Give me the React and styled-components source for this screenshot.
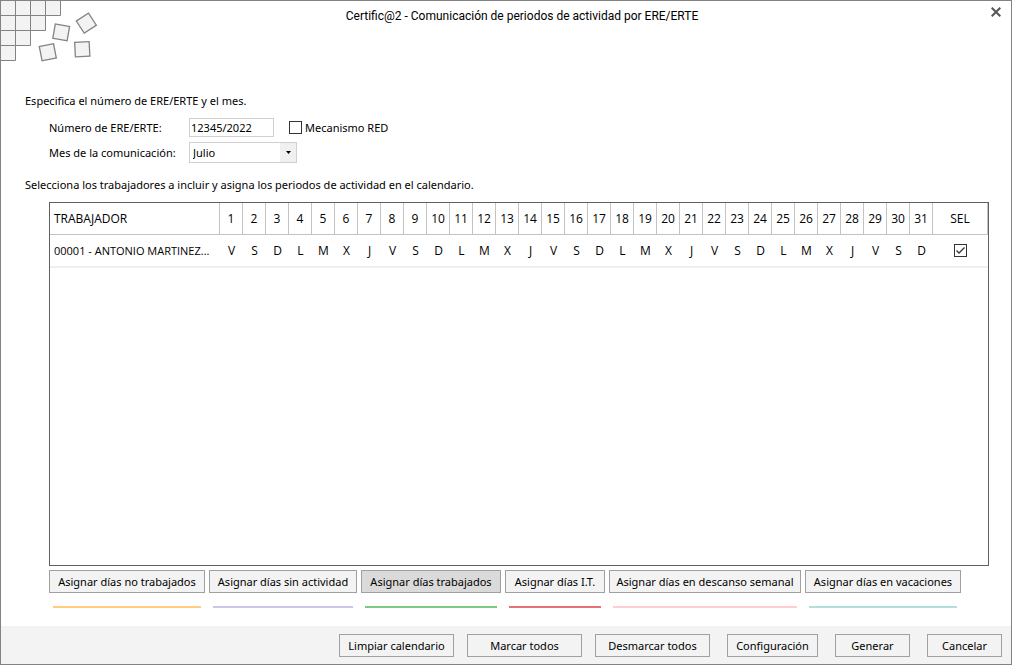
import React, { useState } from 'react';
import styled, { createGlobalStyle } from 'styled-components';

const GlobalStyle = createGlobalStyle`
    * {
        box-sizing: border-box;
    }

    body {
        margin: 0;
        background: #FFFFFF;
        color: #000000;
        font-family: 'Noto Sans', 'Open Sans', sans-serif;
        font-size: 11px;
        line-height: 16px;
    }

    button, input, select {
        font: inherit;
        color: inherit;
    }
`;

const Window = styled.div`
    display: flex;
    flex-direction: column;
    min-height: 100vh;
    border: 1px solid #838383;
`;

const Header = styled.header`
    display: flex;
    align-items: flex-start;
    height: 62px;
`;

const Logo = styled.svg`
    flex: none;
    width: 98px;
    height: 62px;
    fill: #F3F3F3;
    stroke: #838383;
`;

const Title = styled.h1`
    flex: 1;
    margin: 0;
    padding: 7px 0 0;
    font-family: Roboto, 'Noto Sans', sans-serif;
    font-size: 12px;
    font-weight: 400;
    line-height: 16px;
    text-align: center;
`;

const CloseButton = styled.button`
    display: flex;
    justify-content: flex-end;
    width: 66px;
    padding: 6px 10px;
    border: 0;
    background: none;
`;

const Main = styled.main`
    flex: 1;
    display: flex;
    flex-direction: column;
    padding: 30px 22px 18px 24px;
`;

const Hint = styled.p`
    margin: 0;
`;

const Form = styled.form`
    display: flex;
    flex-direction: column;
    gap: 5px;
    padding: 9px 0 14px 24px;
`;

const Field = styled.div`
    display: flex;
    align-items: center;
`;

const Label = styled.label`
    width: 140px;
`;

const TextInput = styled.input`
    width: 85px;
    height: 19px;
    margin-right: 15px;
    padding: 0 1px;
    border: 1px solid #D0D0D0;
`;

const SelectBox = styled.div`
    display: grid;
    width: 108px;
    height: 21px;

    > * {
        grid-area: 1 / 1;
    }
`;

const Select = styled.select`
    appearance: none;
    padding: 0 20px 0 3px;
    border: 1px solid #D0D0D0;
    border-radius: 0;
    background: linear-gradient(#F0F0F0, #F0F0F0) right / 16px 100% no-repeat #FFFFFF;
`;

const Arrow = styled.svg`
    align-self: center;
    justify-self: end;
    margin-right: 6px;
    pointer-events: none;
`;

const CheckLabel = styled.label`
    display: flex;
    align-items: center;
    gap: 3px;
`;

const CheckBox = styled.span`
    display: grid;
    width: 13px;
    height: 13px;

    > * {
        grid-area: 1 / 1;
    }

    svg {
        display: none;
        pointer-events: none;
    }

    input:checked + svg {
        display: block;
    }
`;

const CheckInput = styled.input`
    appearance: none;
    width: 13px;
    height: 13px;
    margin: 0;
    border: 1px solid #333333;
    background: #FFFFFF;
`;

const Calendar = styled.div`
    flex: 1;
    margin: 9px 0 4px 24px;
    border: 1px solid #606060;
`;

const Table = styled.table`
    width: 100%;
    table-layout: fixed;
    border-collapse: separate;
    border-spacing: 0;
    font-family: 'Open Sans', 'Noto Sans', sans-serif;
    font-size: 12px;
    line-height: 16px;
    text-align: center;
`;

const HeadCell = styled.th`
    width: ${({ $width }) => $width || 'auto'};
    height: 32px;
    padding: ${({ $left }) => ($left ? '0 4px' : '0')};
    border-right: 1px solid #C3C3C3;
    border-bottom: 1px solid #C3C3C3;
    font-weight: 400;
    text-align: ${({ $left }) => ($left ? 'left' : 'center')};
`;

const Cell = styled.td`
    height: 33px;
    padding: 0;
    border-bottom: 2px solid #EFEFEF;

    ${CheckBox} {
        margin: 0 auto;
    }
`;

const WorkerCell = styled(Cell)`
    padding-left: 4px;
    font-size: 11px;
    text-align: left;
    white-space: nowrap;
`;

const Assignments = styled.div`
    display: flex;
    gap: 4px;
    padding-left: 24px;
`;

const Assignment = styled.div`
    display: flex;
    flex-direction: column;
    gap: 13px;
    width: ${({ $width }) => $width};
`;

const ColorBar = styled.div`
    height: 2px;
    margin: 0 4px;
    background: ${({ $color }) => $color};
`;

const Button = styled.button`
    width: ${({ $width }) => $width || 'auto'};
    height: 23px;
    padding: 0;
    border: 1px solid #A0A0A0;
    background: ${({ $active }) => ($active ? '#DADADA' : '#F3F3F3')};
    white-space: nowrap;
`;

const Footer = styled.footer`
    display: flex;
    justify-content: flex-end;
    gap: 17px;
    padding: 8px 9px 7px;
    background: #F3F3F3;
`;

const ButtonGroup = styled.div`
    display: flex;
    gap: 13px;
`;

const DAYS = Array.from({ length: 31 }, (_, i) => i + 1);
const WEEK = ['V', 'S', 'D', 'L', 'M', 'X', 'J'];
const MONTHS = ['Enero', 'Febrero', 'Marzo', 'Abril', 'Mayo', 'Junio', 'Julio', 'Agosto', 'Septiembre', 'Octubre', 'Noviembre', 'Diciembre'];

const ASSIGNMENTS = [
	{ text: 'Asignar días no trabajados', color: '#FFCC80', width: '156px' },
	{ text: 'Asignar días sin actividad', color: '#D1C4E9', width: '148px' },
	{ text: 'Asignar días trabajados', color: '#81C784', width: '140px' },
	{ text: 'Asignar días I.T.', color: '#E57373', width: '100px' },
	{ text: 'Asignar días en descanso semanal', color: '#FFCDD2', width: '192px' },
	{ text: 'Asignar días en vacaciones', color: '#B2DFDB', width: '156px' },
];

const Check = (props) => (
	<CheckBox>
		<CheckInput type="checkbox" {...props} />
		<svg width="13" height="13" fill="none" stroke="#333333" strokeWidth="1.3">
			<path d="M2.5 6.5 5 9 10.5 3.5" />
		</svg>
	</CheckBox>
);

const WindowLogo = () => (
	<Logo viewBox="1 1 98 62" aria-hidden="true">
		<path d="M0 .5H60.5V15.5H45.5V30.5H30.5V45.5H15.5V60.5H0Z" />
		<path d="M0 15.5H45.5M0 30.5H30.5M0 45.5H15.5M15.5 0V45.5M30.5 0V30.5M45.5 0V15.5" />
		<g strokeWidth="1.3">
			<rect x="54" y="25" width="14.5" height="14.5" transform="rotate(10 61 32)" />
			<rect x="79" y="16" width="14.5" height="14.5" transform="rotate(-33 86 23)" />
			<rect x="40.5" y="45" width="14.5" height="14.5" transform="rotate(-11 47.5 52)" />
			<rect x="75" y="42" width="14.5" height="14.5" transform="rotate(-3 82 49)" />
		</g>
	</Logo>
);

const App = () => {
	const [active, setActive] = useState(2);

	return (
		<Window>
			<GlobalStyle />
			<Header>
				<WindowLogo />
				<Title>Certific@2 - Comunicación de periodos de actividad por ERE/ERTE</Title>
				<CloseButton type="button" aria-label="Cerrar">
					<svg width="10" height="10" fill="none" stroke="#555555" strokeWidth="2">
						<path d="M.7.7 9.3 9.3M9.3.7.7 9.3" />
					</svg>
				</CloseButton>
			</Header>
			<Main>
				<Hint>Especifica el número de ERE/ERTE y el mes.</Hint>
				<Form>
					<Field>
						<Label htmlFor="ere">Número de ERE/ERTE:</Label>
						<TextInput id="ere" defaultValue="12345/2022" />
						<CheckLabel>
							<Check />
							Mecanismo RED
						</CheckLabel>
					</Field>
					<Field>
						<Label htmlFor="mes">Mes de la comunicación:</Label>
						<SelectBox>
							<Select id="mes" defaultValue="Julio">
								{MONTHS.map((month) => <option key={month}>{month}</option>)}
							</Select>
							<Arrow width="5" height="3"><path d="M0 0H5L2.5 3Z" /></Arrow>
						</SelectBox>
					</Field>
				</Form>
				<Hint>Selecciona los trabajadores a incluir y asigna los periodos de actividad en el calendario.</Hint>
				<Calendar>
					<Table>
						<thead>
							<tr>
								<HeadCell $left>TRABAJADOR</HeadCell>
								{DAYS.map((day) => <HeadCell key={day} $width="23px">{day}</HeadCell>)}
								<HeadCell $width="55px">SEL</HeadCell>
							</tr>
						</thead>
						<tbody>
							<tr>
								<WorkerCell>00001 - ANTONIO MARTINEZ...</WorkerCell>
								{DAYS.map((day) => <Cell key={day}>{WEEK[(day - 1) % 7]}</Cell>)}
								<Cell><Check defaultChecked aria-label="Seleccionar trabajador" /></Cell>
							</tr>
						</tbody>
					</Table>
				</Calendar>
				<Assignments>
					{ASSIGNMENTS.map(({ text, color, width }, i) => (
						<Assignment key={text} $width={width}>
							<Button type="button" $active={i === active} onClick={() => setActive(i)}>{text}</Button>
							<ColorBar $color={color} />
						</Assignment>
					))}
				</Assignments>
			</Main>
			<Footer>
				<ButtonGroup>
					<Button type="button" $width="115px">Limpiar calendario</Button>
					<Button type="button" $width="115px">Marcar todos</Button>
					<Button type="button" $width="115px">Desmarcar todos</Button>
				</ButtonGroup>
				<Button type="button" $width="91px">Configuración</Button>
				<Button type="button" $width="75px">Generar</Button>
				<Button type="button" $width="75px">Cancelar</Button>
			</Footer>
		</Window>
	);
};

export default App;
